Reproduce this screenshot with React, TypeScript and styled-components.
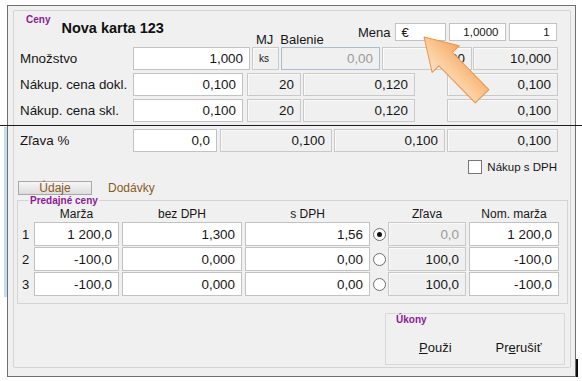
import { Fragment } from "react"
import styled, { createGlobalStyle } from "styled-components"

type Tone = "edit" | "ro" | "off"

type BoxProps = {
  $w?: number
  $ml?: number
  $tone?: Tone
  $left?: boolean
  $size?: number
  $dim?: boolean
}

const GlobalStyle = createGlobalStyle`
  html, body { margin: 0; padding: 0; background: #ffffff; }
  body {
    font-family: "Liberation Sans", Arial, sans-serif;
    font-size: 13px;
    color: #161616;
  }
`

const Page = styled.div`
  position: relative;
  width: 582px;
  height: 381px;
  overflow: hidden;
`

const Window = styled.div`
  box-sizing: border-box;
  width: 569px;
  height: 372px;
  margin: 5px 0 0 7px;
  padding: 4px 4px 0 5px;
  border: 1px solid #707070;
  background: #f0f0f0;
`

const Frame = styled.div`
  box-sizing: border-box;
  height: 358px;
  display: flex;
  flex-direction: column;
  padding: 0 2px 0 6px;
  border: 1px solid #d4d4d4;
  border-radius: 2px;
`

const Caption = styled.div<{ $ml: number; $mt?: number; $over?: boolean }>`
  width: fit-content;
  margin: ${({ $mt }) => $mt ?? 0}px 0 0 ${({ $ml }) => $ml}px;
  padding: ${({ $over }) => ($over ? "0 1px" : "0")};
  background: #f0f0f0;
  font-size: 10px;
  font-weight: bold;
  line-height: 11px;
  color: #8a1a96;
`

const Header = styled.div`
  display: flex;
  height: 36px;
`

const Heading = styled.div`
  display: flex;
  align-items: flex-start;
  width: 236px;
`

const Title = styled.div`
  margin: 9px 0 0 11px;
  font-size: 14.5px;
  font-weight: bold;
  line-height: 17px;
  color: #111;
`

const ColHeads = styled.div`
  display: flex;
  gap: 7px;
  width: 102px;
  margin-top: 21px;
  font-size: 13px;
  line-height: 15px;
`

const Mena = styled.div`
  display: flex;
  align-items: center;
  gap: 3px;
  height: 18px;
  margin-top: 12px;
`

const MenaLabel = styled.span`
  margin-right: 1px;
  font-size: 13px;
`

const Row = styled.div<{ $mt?: number }>`
  display: flex;
  height: 23px;
  margin-top: ${({ $mt }) => $mt ?? 3}px;
`

const Label = styled.div`
  display: flex;
  align-items: center;
  width: 113px;
  font-size: 13.4px;
  white-space: nowrap;
`

const Box = styled.div<BoxProps>`
  box-sizing: border-box;
  flex: none;
  width: ${({ $w }) => ($w ? `${$w}px` : "auto")};
  height: 100%;
  margin-left: ${({ $ml }) => $ml ?? 0}px;
  padding: 0 6px;
  display: flex;
  align-items: center;
  justify-content: ${({ $left }) => ($left ? "flex-start" : "flex-end")};
  font-size: ${({ $size }) => $size ?? 13.4}px;
  white-space: nowrap;
  border: 1px solid
    ${({ $tone }) => ($tone === "off" ? "#a9bdd2" : $tone === "ro" ? "#c9c9c9" : "#c2c2c2")};
  background: ${({ $tone }) => ($tone === "edit" || !$tone ? "#ffffff" : "#f0f0f0")};
  box-shadow: ${({ $tone }) => ($tone === "ro" ? "inset 1px 1px 0 #fafafa" : "none")};
  color: ${({ $tone, $dim }) => ($tone === "off" || $dim ? "#9a9a9a" : "#161616")};
`

const CheckRow = styled.div`
  display: flex;
  justify-content: flex-end;
  align-items: center;
  height: 14px;
  margin-top: 8px;
  padding-right: 11px;
  font-size: 11.5px;
`

const CheckBox = styled.span`
  box-sizing: border-box;
  width: 14px;
  height: 14px;
  margin-right: 5px;
  border: 1px solid #777;
  background: #fff;
`

const Tabs = styled.div`
  display: flex;
  align-items: center;
  height: 14px;
  margin: 7px 0 0 -2px;
  font-size: 12px;
  color: #8a5a24;
`

const TabButton = styled.div`
  box-sizing: border-box;
  width: 74px;
  height: 14px;
  display: flex;
  align-items: center;
  justify-content: center;
  border: 1px solid #a8a8a8;
  background: linear-gradient(#f7f7f7, #dcdcdc);
  line-height: 12px;
`

const Tab = styled.span`
  margin-left: 16px;
`

const Group = styled.div`
  box-sizing: border-box;
  margin: 5px 0 0 -3px;
  padding: 0 0 7px 2px;
  border: 1px solid #d4d4d4;
`

const PriceGrid = styled.div`
  display: grid;
  grid-template-columns: 11px 85px 120px 125px 12px 78px 90px;
  grid-template-rows: 14px repeat(3, 24px);
  column-gap: 3px;
  row-gap: 1px;
  margin-top: 1px;
`

const ColHead = styled.div`
  text-align: center;
  font-size: 12px;
  line-height: 14px;
`

const Num = styled.div`
  display: flex;
  align-items: center;
  justify-content: center;
  font-size: 13px;
`

const Radio = styled.div<{ $on?: boolean }>`
  box-sizing: border-box;
  align-self: center;
  width: 13px;
  height: 13px;
  border: 1px solid #6e6e6e;
  border-radius: 50%;
  background: #fff;
  display: flex;
  align-items: center;
  justify-content: center;
  &::after {
    content: "";
    width: 5px;
    height: 5px;
    border-radius: 50%;
    background: ${({ $on }) => ($on ? "#111" : "transparent")};
  }
`

const Actions = styled.div`
  box-sizing: border-box;
  width: 180px;
  height: 52px;
  margin: 9px 3px 0 auto;
  border: 1px solid #d8d8d8;
`

const ButtonRow = styled.div`
  display: flex;
  gap: 44px;
  margin-top: 15px;
  padding-left: 33px;
  font-size: 13px;
  line-height: 15px;
`

const Mn = styled.span`
  text-decoration: underline;
`

const CropLine = styled.div`
  position: absolute;
  left: 0;
  top: 125px;
  width: 582px;
  height: 1px;
  background: #1c1c1c;
`

const CornerMark = styled.div`
  position: absolute;
  left: 576px;
  top: 359px;
  width: 2px;
  height: 18px;
  background: #111;
`

const Backdrop = styled.div`
  position: absolute;
  left: 4px;
  top: 127px;
  width: 3px;
  height: 170px;
  background: #c7dbee;
`

const Overlay = styled.svg`
  position: absolute;
  left: 0;
  top: 0;
  pointer-events: none;
`

const prices = [
  { m: "1 200,0", bez: "1,300", s: "1,56", on: true, z: "0,0", nom: "1 200,0" },
  { m: "-100,0", bez: "0,000", s: "0,00", on: false, z: "100,0", nom: "-100,0" },
  { m: "-100,0", bez: "0,000", s: "0,00", on: false, z: "100,0", nom: "-100,0" },
]

function Arrow() {
  return (
    <Overlay width="582" height="381" viewBox="0 0 582 381">
      <defs>
        <linearGradient id="arrowFill" x1="0" y1="0" x2="0" y2="1">
          <stop offset="0" stopColor="#fde2c4" />
          <stop offset="0.5" stopColor="#fbc793" />
          <stop offset="1" stopColor="#f5a863" />
        </linearGradient>
      </defs>
      <g transform="translate(424 37) rotate(225.6)">
        <polygon
          points="0,0 -31,-19 -31,-9.5 -83,-9.5 -83,9.5 -31,9.5 -31,19"
          fill="url(#arrowFill)"
          stroke="#e8954a"
          strokeWidth="1"
          strokeLinejoin="round"
        />
      </g>
    </Overlay>
  )
}

export default function App() {
  return (
    <Page>
      <GlobalStyle />
      <Backdrop />
      <Window>
        <Frame>
          <Header>
            <Heading>
              <Caption $ml={6} $mt={3}>Ceny</Caption>
              <Title>Nova karta 123</Title>
            </Heading>
            <ColHeads>
              <span>MJ</span>
              <span>Balenie</span>
            </ColHeads>
            <Mena>
              <MenaLabel>Mena</MenaLabel>
              <Box $w={51} $left $size={13}>€</Box>
              <Box $w={57} $size={11.5}>1,0000</Box>
              <Box $w={48} $size={11.5}>1</Box>
            </Mena>
          </Header>

          <Row $mt={0}>
            <Label>Množstvo</Label>
            <Box $w={117}>1,000</Box>
            <Box $w={27} $ml={2} $tone="ro" $left $size={10}>ks</Box>
            <Box $w={99} $ml={2} $tone="off">0,00</Box>
            <Box $w={90} $ml={2} $tone="ro">20</Box>
            <Box $w={85} $ml={1} $tone="ro">10,000</Box>
          </Row>
          <Row>
            <Label>Nákup. cena dokl.</Label>
            <Box $w={110}>0,100</Box>
            <Box $w={54} $ml={4} $tone="ro">20</Box>
            <Box $w={112} $ml={2} $tone="ro">0,120</Box>
            <Box $w={111} $ml={32} $tone="ro">0,100</Box>
          </Row>
          <Row>
            <Label>Nákup. cena skl.</Label>
            <Box $w={110}>0,100</Box>
            <Box $w={54} $ml={4} $tone="ro">20</Box>
            <Box $w={112} $ml={2} $tone="ro">0,120</Box>
            <Box $w={111} $ml={32} $tone="ro">0,100</Box>
          </Row>
          <Row $mt={7}>
            <Label>Zľava %</Label>
            <Box $w={84}>0,0</Box>
            <Box $w={112} $ml={3} $tone="ro">0,100</Box>
            <Box $w={111} $ml={2} $tone="ro">0,100</Box>
            <Box $w={111} $ml={2} $tone="ro">0,100</Box>
          </Row>

          <CheckRow>
            <CheckBox />
            <span>Nákup s DPH</span>
          </CheckRow>

          <Tabs>
            <TabButton>Údaje</TabButton>
            <Tab>Dodávky</Tab>
          </Tabs>

          <Group>
            <Caption $ml={9} $mt={-6} $over>Predajné ceny</Caption>
            <PriceGrid>
              <span />
              <ColHead>Marža</ColHead>
              <ColHead>bez DPH</ColHead>
              <ColHead>s DPH</ColHead>
              <span />
              <ColHead>Zľava</ColHead>
              <ColHead>Nom. marža</ColHead>
              {prices.map((p, i) => (
                <Fragment key={i}>
                  <Num>{i + 1}</Num>
                  <Box>{p.m}</Box>
                  <Box>{p.bez}</Box>
                  <Box>{p.s}</Box>
                  <Radio $on={p.on} />
                  <Box $tone="ro" $dim={p.on}>{p.z}</Box>
                  <Box>{p.nom}</Box>
                </Fragment>
              ))}
            </PriceGrid>
          </Group>

          <Actions>
            <Caption $ml={10}>Úkony</Caption>
            <ButtonRow>
              <span><Mn>P</Mn>ouži</span>
              <span>Pr<Mn>e</Mn>rušiť</span>
            </ButtonRow>
          </Actions>
        </Frame>
      </Window>
      <CropLine />
      <CornerMark />
      <Arrow />
    </Page>
  )
}
